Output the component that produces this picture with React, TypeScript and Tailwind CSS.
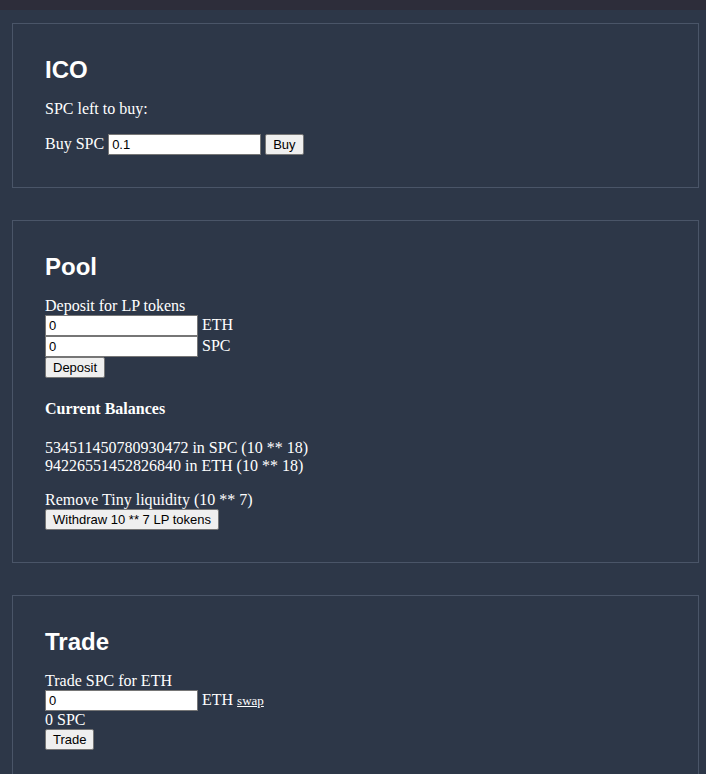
import { useState } from "react";
import type { ButtonHTMLAttributes, InputHTMLAttributes, ReactNode } from "react";

function Card({ title, children }: { title: string; children: ReactNode }) {
  return (
    <section className="border border-[#4a5568] p-8">
      <h2 className="mb-4 font-['Liberation_Sans',Arial,sans-serif] text-2xl leading-7 font-bold">
        {title}
      </h2>
      {children}
    </section>
  );
}

function AmountInput(props: InputHTMLAttributes<HTMLInputElement>) {
  return (
    <input
      type="text"
      className="h-[21px] w-[153px] border border-[#767676] bg-white px-[3px] font-['Liberation_Sans',Arial,sans-serif] text-[13px] leading-4 text-black"
      {...props}
    />
  );
}

function Button(props: ButtonHTMLAttributes<HTMLButtonElement>) {
  return (
    <button
      type="button"
      className="h-[21px] rounded-xs border border-[#767676] bg-[#efefef] px-[7px] pt-px font-['Liberation_Sans',Arial,sans-serif] text-[13px] leading-4 text-black"
      {...props}
    />
  );
}

export default function App() {
  const [buy, setBuy] = useState("0.1");
  const [eth, setEth] = useState("0");
  const [spc, setSpc] = useState("0");
  const [trade, setTrade] = useState("0");

  return (
    <div className="min-h-screen bg-[#2d3748] font-['Liberation_Serif','Times_New_Roman',serif] text-base leading-[18px] text-white">
      <header className="h-[10px] bg-[#2d2d3a]" />
      <main className="flex flex-col gap-8 pt-[13px] pr-[7px] pb-8 pl-3">
        <Card title="ICO">
          <p className="mb-4">SPC left to buy:</p>
          <div className="flex items-baseline gap-1">
            <label htmlFor="buy">Buy SPC</label>
            <AmountInput id="buy" value={buy} onChange={(e) => setBuy(e.target.value)} />
            <Button>Buy</Button>
          </div>
        </Card>

        <Card title="Pool">
          <p>Deposit for LP tokens</p>
          <div className="flex items-baseline gap-1">
            <AmountInput id="eth" value={eth} onChange={(e) => setEth(e.target.value)} />
            <label htmlFor="eth">ETH</label>
          </div>
          <div className="flex items-baseline gap-1">
            <AmountInput id="spc" value={spc} onChange={(e) => setSpc(e.target.value)} />
            <label htmlFor="spc">SPC</label>
          </div>
          <div className="flex">
            <Button>Deposit</Button>
          </div>
          <h4 className="mt-[22px] mb-[21px] font-bold">Current Balances</h4>
          <p>534511450780930472 in SPC (10 ** 18)</p>
          <p className="mb-4">94226551452826840 in ETH (10 ** 18)</p>
          <p>Remove Tiny liquidity (10 ** 7)</p>
          <div className="flex">
            <Button>Withdraw 10 ** 7 LP tokens</Button>
          </div>
        </Card>

        <Card title="Trade">
          <p>Trade SPC for ETH</p>
          <div className="flex items-baseline gap-1">
            <AmountInput id="trade" value={trade} onChange={(e) => setTrade(e.target.value)} />
            <label htmlFor="trade">ETH</label>
            <a href="#swap" className="text-[13px] underline">
              swap
            </a>
          </div>
          <p>0 SPC</p>
          <div className="flex">
            <Button>Trade</Button>
          </div>
        </Card>
      </main>
    </div>
  );
}
